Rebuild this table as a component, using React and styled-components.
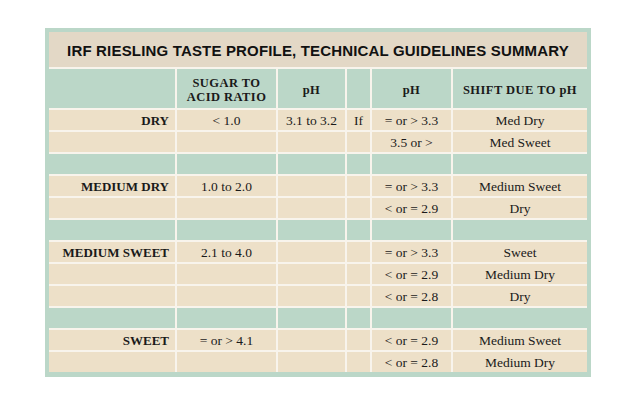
import React from "react";
import styled, { createGlobalStyle } from "styled-components";

const Global = createGlobalStyle`
  html, body { margin: 0; padding: 0; background: #ffffff; }
  #root { width: 638px; height: 413px; overflow: hidden; }
`;

const Page = styled.div`
  padding: 28px 0 0 45px;
  box-sizing: border-box;
  width: 638px;
  height: 413px;
`;

const Frame = styled.div`
  width: 546px;
  box-sizing: border-box;
  background: #bbd7c8;
  padding: 4px 4px 5px 4px;
`;

const Inner = styled.div`
  display: flex;
  flex-direction: column;
  gap: 2px;
  background: #f8f4ec;
`;

const Title = styled.div`
  height: 35px;
  background: #e3d8c6;
  display: flex;
  align-items: center;
  justify-content: center;
  font-family: "Liberation Sans", Arial, sans-serif;
  font-weight: 700;
  font-size: 15px;
  letter-spacing: 0.17px;
  color: #111111;
  padding-top: 1px;
  box-sizing: border-box;
`;

const Grid = styled.div`
  display: grid;
  grid-template-columns: 126px 99px 67px 23px 79px 134px;
  grid-template-rows: 39px repeat(12, 20px);
  gap: 2px;
`;

const Cell = styled.div`
  background: ${(p) => (p.$tone === "green" ? "#bbd7c8" : "#ede0c8")};
  display: flex;
  align-items: center;
  justify-content: ${(p) => (p.$label ? "flex-end" : "center")};
  padding-right: ${(p) => (p.$label ? "6px" : "0")};
  padding-top: 1px;
  box-sizing: border-box;
  font-family: "Liberation Serif", "Times New Roman", serif;
  font-weight: ${(p) => (p.$label ? 700 : 400)};
  font-size: ${(p) => (p.$label ? "13px" : "13.5px")};
  color: #1a1a1a;
  white-space: nowrap;
  line-height: 1;
`;

const HeadCell = styled.div`
  background: #bbd7c8;
  display: flex;
  flex-direction: column;
  align-items: center;
  justify-content: center;
  text-align: center;
  font-family: "Liberation Serif", "Times New Roman", serif;
  font-weight: 700;
  font-size: 12.5px;
  letter-spacing: 0.45px;
  color: #1a1a1a;
  padding-top: 4px;
  box-sizing: border-box;
`;

const HeadLine = styled.span`
  display: block;
  line-height: 13.5px;
  white-space: nowrap;
`;

const header = [[], ["SUGAR TO", "ACID RATIO"], ["pH"], [], ["pH"], ["SHIFT DUE TO pH"]];

const rows = [
  ["DRY", "< 1.0", "3.1 to 3.2", "If", "= or > 3.3", "Med Dry"],
  ["", "", "", "", "3.5 or >", "Med Sweet"],
  null,
  ["MEDIUM DRY", "1.0 to 2.0", "", "", "= or > 3.3", "Medium Sweet"],
  ["", "", "", "", "< or = 2.9", "Dry"],
  null,
  ["MEDIUM SWEET", "2.1 to 4.0", "", "", "= or > 3.3", "Sweet"],
  ["", "", "", "", "< or = 2.9", "Medium Dry"],
  ["", "", "", "", "< or = 2.8", "Dry"],
  null,
  ["SWEET", "= or > 4.1", "", "", "< or = 2.9", "Medium Sweet"],
  ["", "", "", "", "< or = 2.8", "Medium Dry"],
];

export default function App() {
  return (
    <Page>
      <Global />
      <Frame>
        <Inner>
          <Title>IRF RIESLING TASTE PROFILE, TECHNICAL GUIDELINES SUMMARY</Title>
          <Grid>
            {header.map((lines, i) => (
              <HeadCell key={"h" + i}>
                {lines.map((line, j) => (
                  <HeadLine key={j}>{line}</HeadLine>
                ))}
              </HeadCell>
            ))}
            {rows.map((r, ri) =>
              r === null
                ? Array.from({ length: 6 }).map((_, ci) => (
                    <Cell key={ri + "-" + ci} $tone="green" />
                  ))
                : r.map((c, ci) => (
                    <Cell key={ri + "-" + ci} $label={ci === 0}>
                      {c}
                    </Cell>
                  ))
            )}
          </Grid>
        </Inner>
      </Frame>
    </Page>
  );
}
